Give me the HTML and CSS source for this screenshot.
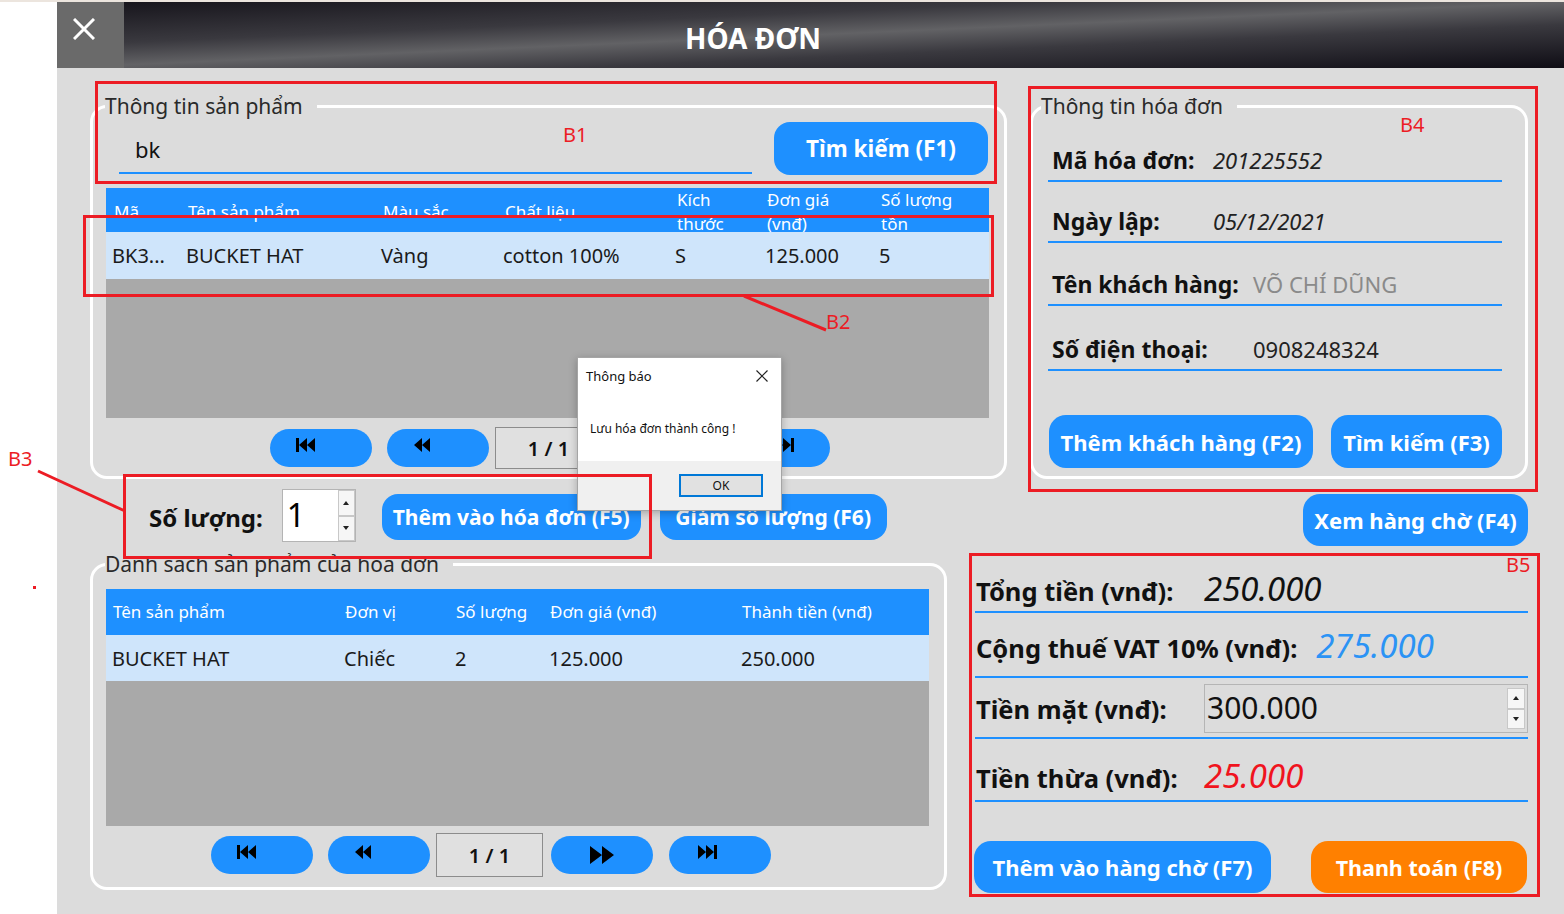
FILE: index.html
```html
<!DOCTYPE html>
<html lang="vi">
<head>
<meta charset="utf-8">
<title>Hóa đơn</title>
<link rel="stylesheet" href="styles.css">
</head>
<body>
<div class="page">
  <div class="gutter"></div>
  <div class="window">
    <header class="titlebar">
      <div class="close-btn">
        <svg width="22" height="22" viewBox="0 0 22 22"><path d="M1 1 L21 21 M21 1 L1 21" stroke="#fff" stroke-width="3" fill="none"/></svg>
      </div>
      <h1 class="title">HÓA ĐƠN</h1>
    </header>

    <main class="content">
      <div class="row-top">
        <fieldset class="group group-product">
          <legend>Thông tin sản phẩm</legend>
          <div class="search">
            <div class="search-input">bk</div>
            <button class="btn btn-search">Tìm kiếm (F1)</button>
          </div>
          <div class="table table-products">
            <div class="thead">
              <div class="th">Mã</div>
              <div class="th">Tên sản phẩm</div>
              <div class="th">Màu sắc</div>
              <div class="th">Chất liệu</div>
              <div class="th two">Kích<br>thước</div>
              <div class="th two">Đơn giá<br>(vnđ)</div>
              <div class="th two">Số lượng<br>tồn</div>
            </div>
            <div class="tr">
              <div class="td">BK3...</div>
              <div class="td">BUCKET HAT</div>
              <div class="td">Vàng</div>
              <div class="td">cotton 100%</div>
              <div class="td">S</div>
              <div class="td">125.000</div>
              <div class="td">5</div>
            </div>
            <div class="tempty"></div>
          </div>
          <div class="pager pager-top">
            <button class="pg pg-first"><svg width="20" height="16" viewBox="0 0 20 16"><rect x="0" y="1" width="3" height="14"/><path d="M11 1 L3 8 L11 15Z M19 1 L11 8 L19 15Z"/></svg></button>
            <button class="pg pg-prev"><svg width="18" height="16" viewBox="0 0 18 16"><path d="M9 1 L1 8 L9 15Z M17 1 L9 8 L17 15Z"/></svg></button>
            <div class="pagebox">1 / 1</div>
            <button class="pg pg-next"><svg width="26" height="20" viewBox="0 0 26 20"><path d="M1 1 L13 10 L1 19Z M13 1 L25 10 L13 19Z"/></svg></button>
            <button class="pg pg-last"><svg width="20" height="16" viewBox="0 0 20 16"><path d="M1 1 L9 8 L1 15Z M9 1 L17 8 L9 15Z"/><rect x="17" y="1" width="3" height="14"/></svg></button>
          </div>
        </fieldset>

        <fieldset class="group group-invoice">
          <legend>Thông tin hóa đơn</legend>
          <div class="irow">
            <span class="ilabel">Mã hóa đơn:</span>
            <span class="ival it">201225552</span>
          </div>
          <div class="irow">
            <span class="ilabel">Ngày lập:</span>
            <span class="ival it">05/12/2021</span>
          </div>
          <div class="irow">
            <span class="ilabel wide">Tên khách hàng:</span>
            <span class="ival muted">VÕ CHÍ DŨNG</span>
          </div>
          <div class="irow">
            <span class="ilabel wide">Số điện thoại:</span>
            <span class="ival">0908248324</span>
          </div>
          <div class="ibtns">
            <button class="btn btn-addcus">Thêm khách hàng (F2)</button>
            <button class="btn btn-findcus">Tìm kiếm (F3)</button>
          </div>
        </fieldset>
      </div>

      <div class="row-mid">
        <span class="qty-label">Số lượng:</span>
        <div class="spin">
          <span class="spin-val">1</span>
          <span class="spin-arrows"><span class="arr up"></span><span class="arr down"></span></span>
        </div>
        <button class="btn btn-add">Thêm vào hóa đơn (F5)</button>
        <button class="btn btn-dec">Giảm số lượng (F6)</button>
        <button class="btn btn-wait">Xem hàng chờ (F4)</button>
      </div>

      <div class="row-bottom">
        <fieldset class="group group-items">
          <legend>Danh sách sản phẩm của hóa đơn</legend>
          <div class="table table-items">
            <div class="thead">
              <div class="th">Tên sản phẩm</div>
              <div class="th">Đơn vị</div>
              <div class="th">Số lượng</div>
              <div class="th">Đơn giá (vnđ)</div>
              <div class="th">Thành tiền (vnđ)</div>
            </div>
            <div class="tr">
              <div class="td">BUCKET HAT</div>
              <div class="td">Chiếc</div>
              <div class="td">2</div>
              <div class="td">125.000</div>
              <div class="td">250.000</div>
            </div>
            <div class="tempty"></div>
          </div>
          <div class="pager pager-bottom">
            <button class="pg pg-first"><svg width="20" height="16" viewBox="0 0 20 16"><rect x="0" y="1" width="3" height="14"/><path d="M11 1 L3 8 L11 15Z M19 1 L11 8 L19 15Z"/></svg></button>
            <button class="pg pg-prev"><svg width="18" height="16" viewBox="0 0 18 16"><path d="M9 1 L1 8 L9 15Z M17 1 L9 8 L17 15Z"/></svg></button>
            <div class="pagebox">1 / 1</div>
            <button class="pg pg-next"><svg width="26" height="20" viewBox="0 0 26 20"><path d="M1 1 L13 10 L1 19Z M13 1 L25 10 L13 19Z"/></svg></button>
            <button class="pg pg-last"><svg width="20" height="16" viewBox="0 0 20 16"><path d="M1 1 L9 8 L1 15Z M9 1 L17 8 L9 15Z"/><rect x="17" y="1" width="3" height="14"/></svg></button>
          </div>
        </fieldset>

        <section class="totals">
          <div class="trow trow-1">
            <span class="tlabel">Tổng tiền (vnđ):</span>
            <span class="tval">250.000</span>
          </div>
          <div class="trow trow-2">
            <span class="tlabel">Cộng thuế VAT 10% (vnđ):</span>
            <span class="tval blue">275.000</span>
          </div>
          <div class="trow trow-3">
            <span class="tlabel">Tiền mặt (vnđ):</span>
            <div class="cash">
              <span class="cash-val">300.000</span>
              <span class="spin-arrows"><span class="arr up"></span><span class="arr down"></span></span>
            </div>
          </div>
          <div class="trow trow-4">
            <span class="tlabel">Tiền thừa (vnđ):</span>
            <span class="tval red">25.000</span>
          </div>
          <div class="tbtns">
            <button class="btn btn-queue">Thêm vào hàng chờ (F7)</button>
            <button class="btn btn-pay">Thanh toán (F8)</button>
          </div>
        </section>
      </div>
    </main>
  </div>
</div>

<div class="msgbox">
  <div class="msg-title">
    <span>Thông báo</span>
    <svg width="12" height="12" viewBox="0 0 12 12"><path d="M0.5 0.5 L11.5 11.5 M11.5 0.5 L0.5 11.5" stroke="#222" stroke-width="1.2" fill="none"/></svg>
  </div>
  <div class="msg-body">Lưu hóa đơn thành công !</div>
  <div class="msg-foot"><button class="msg-ok">OK</button></div>
</div>

<svg class="marks" width="1564" height="914" viewBox="0 0 1564 914">
  <g fill="none" stroke="#ec1c24" stroke-width="3">
    <rect x="96.5" y="82.5" width="899" height="100"/>
    <rect x="84.5" y="216.5" width="908" height="79"/>
    <rect x="124.5" y="475.5" width="526" height="82"/>
    <rect x="1029.5" y="87.5" width="507" height="403"/>
    <rect x="970.5" y="554.5" width="568" height="341"/>
    <line x1="744" y1="296" x2="826" y2="330"/>
    <line x1="38" y1="471" x2="125" y2="511"/>
  </g>
</svg>
<span class="mark-label m-b1">B1</span>
<span class="mark-label m-b2">B2</span>
<span class="mark-label m-b3">B3</span>
<span class="mark-label m-b4">B4</span>
<span class="mark-label m-b5">B5</span>
<span class="mark-dot"></span>
</body>
</html>
```

FILE: styles.css
```css
* { box-sizing: border-box; }

html, body { margin: 0; height: 100%; }

body {
  font-family: "Noto Sans", "Open Sans", sans-serif;
  background: #fff;
  border-top: 2px solid #ece5de;
  overflow: hidden;
  color: #1a1a1a;
}

.page { display: flex; height: 912px; }
.gutter { width: 57px; flex: none; }
.window { flex: 1; display: flex; flex-direction: column; }

/* ---------- title bar ---------- */
.titlebar {
  height: 66px;
  flex: none;
  display: flex;
  background: linear-gradient(177.5deg, #15131a 0%, #3a393f 33%, #626265 50%, #3a393f 67%, #0f0d15 100%);
}
.close-btn {
  width: 67px;
  flex: none;
  background: #6a6a6a;
  padding: 16px 0 0 16px;
}
.close-btn svg { display: block; }
.title {
  margin: 0 0 0 561px;
  padding-top: 3px;
  font-size: 28px;
  font-weight: 700;
  line-height: 66px;
  color: #fff;
}

/* ---------- content ---------- */
.content {
  flex: 1;
  background: #dcdcdc;
  padding: 26px 36px 0 33px;
  display: flex;
  flex-direction: column;
}

.group {
  margin: 0;
  border: 3px solid #fff;
  border-radius: 17px;
  min-width: 0;
}
.group legend {
  font-size: 21px;
  line-height: 24px;
  color: #2a2a2a;
  padding: 0 14px 0 0;
  margin-left: -1px;
}

.btn {
  border: none;
  background: #1e90ff;
  color: #fff;
  font-family: inherit;
  font-weight: 700;
  font-size: 21px;
  border-radius: 15px;
  padding: 0;
  display: flex;
  align-items: center;
  justify-content: center;
  white-space: nowrap;
}

/* top row */
.row-top { display: flex; gap: 23px; height: 385px; }
.group-product { width: 917px; padding: 4px 15px 7px 13px; }
.group-invoice { width: 498px; padding: 0 23px 8px 15px; }
.group-invoice legend { margin-left: -7px; }

.search { display: flex; align-items: flex-start; height: 53px; }
.search-input {
  margin-left: 13px;
  width: 633px;
  height: 52px;
  border-bottom: 2px solid #1e90ff;
  font-size: 22px;
  line-height: 46px;
  padding: 4px 0 0 16px;
  color: #111;
}
.btn-search { margin-left: 22px; width: 214px; height: 53px; font-size: 22.5px; border-radius: 16px; }

/* tables */
.thead {
  display: grid;
  background: #1e90ff;
  color: #fff;
  font-size: 17px;
  line-height: 24px;
  overflow: hidden;
}
.th { padding-left: 8px; align-self: center; white-space: nowrap; }
.th.two { align-self: start; }
.tr {
  display: grid;
  background: #cfe5fb;
  font-size: 20px;
  align-items: center;
  color: #1a1a1a;
}
.td { padding-left: 6px; white-space: nowrap; }
.tempty { background: #a9a9a9; }

.table-products { margin-top: 13px; width: 883px; }
.table-products .thead,
.table-products .tr { grid-template-columns: 74px 195px 122px 172px 90px 114px 1fr; }
.table-products .thead { height: 44px; }
.table-products .tr { height: 47px; }
.table-products .tempty { height: 139px; }

.table-items { width: 823px; }
.table-items .thead,
.table-items .tr { grid-template-columns: 232px 111px 94px 192px 1fr; }
.table-items .thead { height: 46px; }
.table-items .th { padding-left: 7px; }
.table-items .tr { height: 46px; }
.table-items .tempty { height: 145px; }

/* pagers */
.pager { display: flex; align-items: center; }
.pager-top { margin-top: 9px; height: 42px; margin-left: 164px; }
.pager-bottom { margin-top: 7px; height: 44px; margin-left: 105px; }
.pg {
  width: 102px;
  height: 38px;
  border: none;
  border-radius: 19px;
  background: #1e90ff;
  display: flex;
  align-items: center;
  padding: 0 0 0 26px;
}
.pg svg { margin-top: -6px; fill: #000; }
.pg-prev { margin-left: 15px; }
.pg-next { margin-left: 8px; justify-content: center; padding: 0; }
.pg-next svg { margin-top: 0; }
.pg-last { margin-left: 16px; padding-left: 28px; }
.pager-top .pg-last { padding-left: 46px; }
.pagebox {
  margin-left: 6px;
  width: 107px;
  height: 42px;
  border: 1px solid #8c8c8c;
  background: #e0e0e0;
  display: flex;
  align-items: center;
  justify-content: center;
  font-size: 20px;
  font-weight: 600;
  color: #111;
}
.pager-bottom .pagebox { height: 44px; }

/* invoice info */
.irow {
  display: flex;
  align-items: baseline;
  height: 40px;
  border-bottom: 2px solid #1e90ff;
  line-height: 36px;
}
.irow:nth-of-type(1) { margin-top: 24px; }
.irow:nth-of-type(2) { margin-top: 21px; }
.irow:nth-of-type(3) { margin-top: 23px; }
.irow:nth-of-type(4) { margin-top: 25px; }
.ilabel {
  width: 165px;
  flex: none;
  padding-left: 4px;
  font-size: 23px;
  font-weight: 700;
  color: #111;
  white-space: nowrap;
}
.ilabel.wide { width: 205px; }
.ival { font-size: 22px; color: #222; }
.ival.it { font-style: italic; }
.ival.muted { color: #8a8a8a; }
.ibtns { display: flex; gap: 18px; margin-top: 44px; padding-left: 1px; }
.btn-addcus { width: 264px; height: 53px; font-size: 22px; border-radius: 17px; }
.btn-findcus { width: 171px; height: 53px; font-size: 22px; border-radius: 17px; }

/* middle row */
.row-mid {
  display: flex;
  align-items: flex-start;
  height: 73px;
  padding-top: 10px;
  flex: none;
}
.qty-label {
  margin-left: 59px;
  padding-top: 2px;
  font-size: 24px;
  font-weight: 700;
  line-height: 53px;
  color: #111;
}
.spin {
  margin-left: 19px;
  width: 74px;
  height: 53px;
  background: #fff;
  border: 1px solid #b4b4b4;
  display: flex;
}
.spin-val { flex: 1; font-size: 32px; line-height: 50px; padding-left: 4px; color: #000; }
.spin-arrows { width: 17px; display: flex; flex-direction: column; flex: none; }
.arr {
  flex: 1;
  border: 1px solid #c8c8c8;
  background: #f6f6f6;
  display: flex;
  align-items: center;
  justify-content: center;
}
.arr::before {
  content: "";
  border-left: 3px solid transparent;
  border-right: 3px solid transparent;
}
.arr.up::before { border-bottom: 4px solid #222; }
.arr.down::before { border-top: 4px solid #222; }

.btn-add { margin-left: 26px; margin-top: 5px; width: 259px; height: 46px; border-radius: 16px; }
.btn-dec { margin-left: 19px; margin-top: 5px; width: 227px; height: 46px; border-radius: 16px; }
.btn-wait { margin-left: auto; margin-top: 5px; width: 225px; height: 52px; font-size: 22px; border-radius: 17px; }

/* bottom row */
.row-bottom { display: flex; gap: 28px; }
.group-items { width: 857px; height: 338px; padding: 13px 15px 10px 13px; flex: none; }

.totals { flex: 1; display: flex; flex-direction: column; }
.trow {
  display: flex;
  align-items: baseline;
  gap: 19px;
  border-bottom: 2px solid #1e90ff;
  line-height: 40px;
}
.tlabel {
  min-width: 210px;
  padding-left: 1px;
  font-size: 25.5px;
  font-weight: 700;
  color: #111;
  white-space: nowrap;
}
.tval { font-size: 33px; font-style: italic; color: #111; }
.tval.blue { color: #2b93f5; }
.tval.red { color: #f0141e; }
.trow-1 { height: 61px; padding-top: 17px; }
.trow-2 { height: 65px; padding-top: 13px; }
.trow-3 { height: 61px; align-items: center; padding: 6px 0 4px; }
.trow-4 { height: 63px; padding-top: 17px; }
.cash {
  flex: 1;
  height: 49px;
  border: 1px solid #b5b5b5;
  display: flex;
}
.cash-val { flex: 1; font-size: 30px; line-height: 46px; padding-left: 2px; color: #111; }
.cash .spin-arrows { width: 18px; margin: 3px 2px 3px 0; }
.tbtns { display: flex; justify-content: space-between; margin-top: 39px; }
.btn-queue { width: 297px; height: 52px; margin-left: -1px; font-size: 22px; border-radius: 17px; }
.btn-pay { width: 216px; height: 52px; margin-right: 1px; background: #ff8000; font-size: 21.5px; border-radius: 17px; }

/* message box */
.msgbox {
  position: absolute;
  left: 577px;
  top: 357px;
  width: 205px;
  height: 154px;
  background: #fff;
  border: 1px solid #a5a5a5;
  box-shadow: 0 2px 8px rgba(0, 0, 0, 0.25);
  display: flex;
  flex-direction: column;
  z-index: 10;
}
.msg-title {
  height: 36px;
  display: flex;
  align-items: center;
  justify-content: space-between;
  padding: 0 13px 0 8px;
  font-size: 13px;
  color: #111;
}
.msg-body { flex: 1; font-size: 12px; line-height: 18px; padding: 26px 0 0 12px; color: #111; }
.msg-foot {
  height: 49px;
  background: #f0f0f0;
  display: flex;
  justify-content: flex-end;
  align-items: center;
  padding-right: 18px;
}
.msg-ok {
  width: 84px;
  height: 23px;
  border: 1px solid #0078d7;
  box-shadow: inset 0 0 0 1px #0078d7;
  background: #e1e1e1;
  font-family: inherit;
  font-size: 12px;
  color: #111;
  padding: 0;
}

/* annotations */
.marks { position: absolute; left: 0; top: 0; z-index: 20; pointer-events: none; }
.mark-label {
  position: absolute;
  z-index: 21;
  font-size: 20px;
  line-height: 20px;
  color: #ec1c24;
}
.m-b1 { left: 563px; top: 125px; }
.m-b2 { left: 826px; top: 312px; }
.m-b3 { left: 8px; top: 449px; }
.m-b4 { left: 1400px; top: 115px; }
.m-b5 { left: 1506px; top: 555px; }
.mark-dot {
  position: absolute;
  left: 33px;
  top: 586px;
  width: 3px;
  height: 3px;
  background: #ec1c24;
  z-index: 21;
}
```
